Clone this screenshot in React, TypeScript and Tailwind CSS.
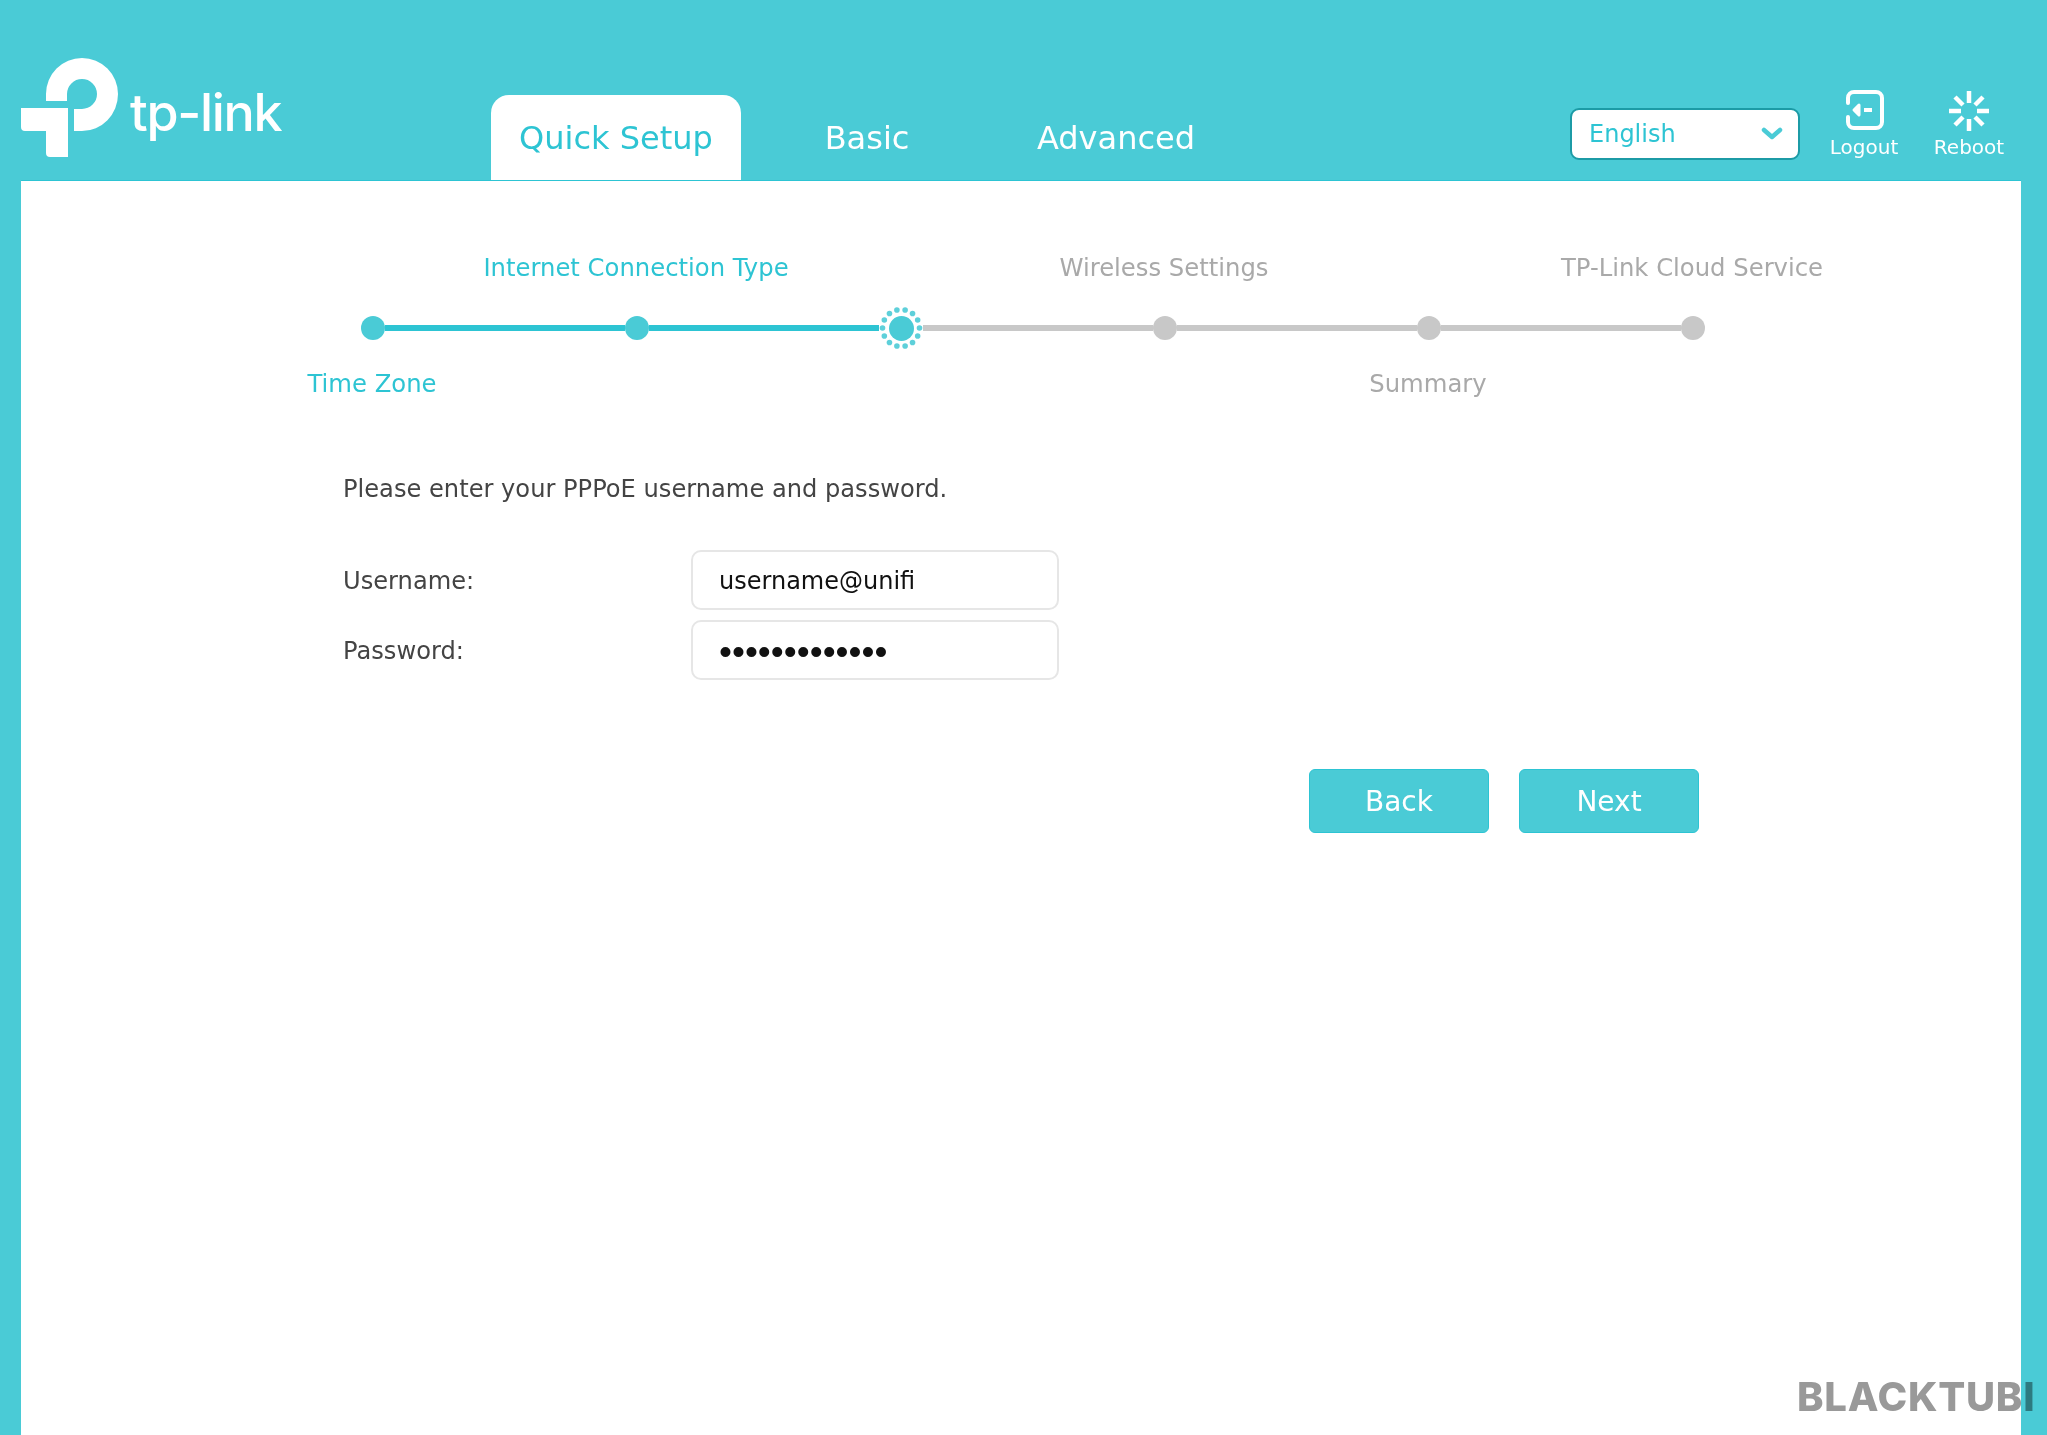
import React from "react";

const Step = ({ state }: { state: "done" | "current" | "todo" }) => {
  if (state === "current") {
    const dots = Array.from({ length: 14 }, (_, i) => {
      const a = (i / 14) * Math.PI * 2;
      return <circle key={i} cx={22 + 18.5 * Math.cos(a)} cy={22 + 18.5 * Math.sin(a)} r={2.8} fill="#5ed0da" />;
    });
    return (
      <div className="relative flex h-[44px] w-[44px] shrink-0 items-center justify-center">
        <svg width="44" height="44" viewBox="0 0 44 44" className="absolute inset-0">{dots}</svg>
        <div className="h-[25px] w-[25px] rounded-full bg-[#4acbd6]" />
      </div>
    );
  }
  return <div className={`h-[24px] w-[24px] shrink-0 rounded-full ${state === "done" ? "bg-[#4acbd6]" : "bg-[#c8c8c8]"}`} />;
};

const Line = ({ on, cls }: { on?: boolean; cls: string }) => (
  <div className={`h-[6px] ${cls} ${on ? "bg-[#2dc4d3]" : "bg-[#c8c8c8]"}`} />
);

const Label = ({ text, on }: { text?: string; on?: boolean }) => (
  <div className="flex justify-center">
    {text ? <span className={`whitespace-nowrap ${on ? "text-[#2dc4d3]" : ""}`}>{text}</span> : null}
  </div>
);

export default function App() {
  return (
    <div className="flex min-h-[1435px] w-full flex-col bg-[#4acbd6] font-['DejaVu_Sans',sans-serif]">
      <header className="flex h-[180px] shrink-0 items-stretch pl-[21px] pr-[42px]">
        <div className="mt-[58px] flex h-[99px] w-[470px] shrink-0 items-start">
          <svg width="97" height="99" viewBox="21 58 97 99" fill="#fff" className="shrink-0">
            <path d="M46 101V94A36 36 0 0 1 118 94A36 37 0 0 1 82 131H74V109H82A15 15 0 1 0 67 94V101Z" />
            <path d="M21 108H68V157H50A4 4 0 0 1 46 153V131H25A4 4 0 0 1 21 127Z" />
          </svg>
          <span className="ml-[12px] mt-[25px] font-['Inter',sans-serif] text-[52px] font-medium leading-[60px] tracking-[-1.3px] text-white">tp-link</span>
        </div>
        <nav className="flex items-end text-[32px]">
          <div className="flex h-[85px] w-[250px] items-center justify-center rounded-t-[18px] bg-white text-[#2dc4d3]">Quick Setup</div>
          <div className="ml-[55px] flex h-[85px] w-[142px] items-center justify-center text-white">Basic</div>
          <div className="ml-[71px] flex h-[85px] w-[214px] items-center justify-center text-white">Advanced</div>
        </nav>
        <div className="ml-auto flex items-start">
          <div className="mt-[108px] flex h-[52px] w-[230px] items-center justify-between rounded-[9px] border-2 border-[#1c9ba6] bg-white pl-[17px] pr-[15px] text-[24px] text-[#2dc4d3]">
            <span>English</span>
            <svg width="22" height="14" viewBox="0 0 22 14" fill="none" stroke="#4acbd6" strokeWidth="4.5" strokeLinecap="round" strokeLinejoin="round"><path d="M3 3l8 7 8-7" /></svg>
          </div>
          <div className="ml-[28px] mt-[90px] flex w-[72px] flex-col items-center text-[20px] leading-[26px] text-white">
            <svg width="40" height="40" viewBox="0 0 40 40" fill="none" stroke="#fff" strokeWidth="4" strokeLinecap="round" strokeLinejoin="round">
              <path d="M4 13V8a6 6 0 0 1 6-6h22a6 6 0 0 1 6 6v24a6 6 0 0 1-6 6H10a6 6 0 0 1-6-6v-5" />
              <path d="M20 20h8" strokeLinecap="butt" />
              <path d="M15 15l-5 5 5 5z" fill="#fff" strokeWidth="3" />
            </svg>
            <span className="mt-[4px]">Logout</span>
          </div>
          <div className="ml-[33px] mt-[90px] flex w-[72px] flex-col items-center text-[20px] leading-[26px] text-white">
            <svg width="42" height="42" viewBox="0 0 42 42" fill="none" stroke="#fff" strokeWidth="4.5" strokeLinecap="butt">
              <path d="M21 1v12M21 29v12M1 21h12M29 21h12M7 7l8 8M27 27l8 8M35 7l-8 8M15 27l-8 8" />
            </svg>
            <span className="mt-[2px]">Reboot</span>
          </div>
        </div>
      </header>

      <main className="ml-[21px] mr-[26px] flex flex-1 flex-col border-t border-[#2dc4d3] bg-white">
        <div className="mt-[71px] ml-[219px] grid w-[1584px] grid-cols-6 text-[24.3px] leading-[32px] text-[#a9a9a9]">
          <Label />
          <Label text="Internet Connection Type" on />
          <Label />
          <Label text="Wireless Settings" />
          <Label />
          <Label text="TP-Link Cloud Service" />
        </div>
        <div className="mt-[22px] ml-[340px] flex h-[44px] items-center">
          <Step state="done" />
          <Line on cls="w-[240px]" />
          <Step state="done" />
          <Line on cls="w-[230px]" />
          <Step state="current" />
          <Line cls="w-[230px]" />
          <Step state="todo" />
          <Line cls="w-[240px]" />
          <Step state="todo" />
          <Line cls="w-[240px]" />
          <Step state="todo" />
        </div>
        <div className="mt-[18px] ml-[219px] grid w-[1584px] grid-cols-6 text-[24.3px] leading-[32px] text-[#a9a9a9]">
          <Label text="Time Zone" on />
          <Label />
          <Label />
          <Label />
          <Label text="Summary" />
          <Label />
        </div>

        <div className="ml-[322px] w-[1356px] text-[24.15px] text-[#444]">
          <p className="mt-[73px] leading-[32px]">Please enter your PPPoE username and password.</p>
          <div className="mt-[45px] flex items-center">
            <label className="w-[348px] pt-[3px]">Username:</label>
            <input readOnly value="username@unifi" className="h-[60px] w-[368px] rounded-[10px] border-2 border-[#e6e6e6] bg-white px-[26px] pt-[2px] text-[24px] text-[#111] outline-none" />
          </div>
          <div className="mt-[10px] flex items-center">
            <label className="w-[348px] pt-[3px]">Password:</label>
            <input readOnly type="password" value="1234567890123" className="h-[60px] w-[368px] rounded-[10px] border-2 border-[#e6e6e6] bg-white px-[26px] pt-[4px] font-['Liberation_Sans',sans-serif] text-[37px] text-[#111] outline-none" />
          </div>
          <div className="mt-[89px] flex justify-end gap-[30px]">
            <button className="h-[64px] w-[180px] rounded-[6px] border border-[#2dc4d3] bg-[#4acbd6] pt-[1px] text-[28px] text-white">Back</button>
            <button className="h-[64px] w-[180px] rounded-[6px] border border-[#2dc4d3] bg-[#4acbd6] pt-[1px] text-[28px] text-white">Next</button>
          </div>
        </div>
      </main>
      <div className="absolute left-[1797px] top-[1375px] font-['Inter',sans-serif] text-[40px] font-extrabold leading-[44px] tracking-[0.75px] text-[#999] mix-blend-multiply">BLACKTUBI</div>
    </div>
  );
}
